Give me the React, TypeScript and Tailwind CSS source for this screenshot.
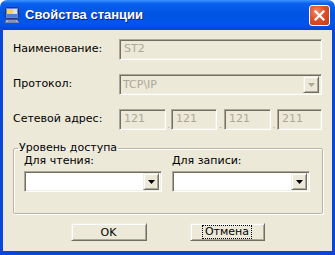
import React from "react";

const font = { fontFamily: '"DejaVu Sans", "Liberation Sans", sans-serif' };

// sunken 3D edit border (XP classic controls)
const sunken =
  "border-t border-l border-t-[#aca899] border-l-[#aca899] border-b border-r border-b-white border-r-white shadow-[inset_1px_1px_0_#716f64,inset_-1px_-1px_0_#f1efe2]";
const raised =
  "border-t border-l border-t-[#f1efe2] border-l-[#f1efe2] border-b border-r border-b-[#716f64] border-r-[#716f64] shadow-[inset_1px_1px_0_#ffffff,inset_-1px_-1px_0_#aca899] bg-[#ece9d8]";

const Arrow = ({ color }: { color: string }) => (
  <svg width="7" height="4" viewBox="0 0 7 4">
    <path d="M0 0h7L3.5 4z" fill={color} />
  </svg>
);

const Combo = ({ width, disabled, value }: { width: string; disabled?: boolean; value?: string }) => (
  <div
    className={`${sunken} ${width} h-[21px] flex items-center justify-between pl-[3px] pr-[2px] ${
      disabled ? "bg-[#ece9d8] text-[#aca899]" : "bg-white"
    }`}
  >
    <span className="text-[11px] leading-none">{value}</span>
    <div className={`${raised} w-[16px] h-[17px] flex items-center justify-center`}>
      <Arrow color={disabled ? "#aca899" : "#000"} />
    </div>
  </div>
);

const Field = ({ width, value }: { width: string; value: string }) => (
  <div className={`${sunken} ${width} h-[21px] bg-[#ece9d8] text-[#aca899] flex items-center pl-[4px] text-[11px]`}>
    {value}
  </div>
);

const Dot = ({ w }: { w: string }) => (
  <span className={`${w} text-[#aca899] text-[9px] leading-none text-center`}>.</span>
);

const App = () => {
  return (
    <div className="w-[335px] h-[255px] flex flex-col text-black" style={font}>
      {/* title bar */}
      <div className="h-[30px] rounded-t-[7px] bg-[linear-gradient(to_bottom,#3d95ff_0%,#0a60f0_12%,#0054e3_45%,#0055eb_80%,#0046d5_100%)] flex items-center pl-[4px] pr-[5px]">
        <svg width="17" height="17" viewBox="0 0 17 17" className="mr-[4px] mt-[1px]">
          <rect x="1.5" y="0.5" width="13" height="11" rx="1" fill="#6c86c8" stroke="#26347a" />
          <rect x="3" y="2" width="10" height="8" fill="#d7e4f7" />
          <path d="M3 2h6v5H3z" fill="#f0d840" />
          <path d="M3 7h10v3H3z" fill="#4a80d8" />
          <path d="M2 12.5h11l3 3.5H0.5z" fill="#a8b2cf" stroke="#3a4a80" strokeWidth="0.8" />
          <path d="M4 14h8" stroke="#5a6690" strokeWidth="0.8" />
        </svg>
        <span
          className="text-white font-bold text-[13px] [text-shadow:1px_1px_0_#0a1e8c]"
          style={{ fontFamily: '"Liberation Sans", Arial, sans-serif' }}
        >
          Свойства станции
        </span>
        <div className="ml-auto w-[21px] h-[21px] rounded-[3px] border border-white bg-[radial-gradient(circle_at_35%_30%,#f08a6a_0%,#e0502a_45%,#c23a14_100%)] flex items-center justify-center">
          <svg width="11" height="11" viewBox="0 0 11 11">
            <path d="M1.5 1.5l8 8M9.5 1.5l-8 8" stroke="#fff" strokeWidth="2.2" strokeLinecap="square" />
          </svg>
        </div>
      </div>

      {/* body */}
      <div className="flex-1 bg-[#ece9d8] border-x-[3px] border-b-[4px] border-[#0847d9] flex flex-col pl-[10px] pr-[10px] pt-[9px] text-[11px]">
        <div className="flex items-center h-[21px]">
          <span className="w-[106px]">Наименование:</span>
          <Field width="w-[203px]" value="ST2" />
        </div>
        <div className="flex items-center h-[21px] mt-[14px]">
          <span className="w-[106px]">Протокол:</span>
          <Combo width="w-[203px]" disabled value="TCP\IP" />
        </div>
        <div className="flex items-center h-[21px] mt-[14px]">
          <span className="w-[106px]">Сетевой адрес:</span>
          <div className="flex items-end">
            <Field width="w-[47px]" value="121" />
            <Dot w="w-[5px]" />
            <Field width="w-[46px]" value="121" />
            <Dot w="w-[7px]" />
            <Field width="w-[47px]" value="121" />
            <Dot w="w-[6px]" />
            <Field width="w-[45px]" value="211" />
          </div>
        </div>

        <fieldset className="mt-[12px] w-[310px] h-[72px] border border-[#b8b5a5] shadow-[1px_1px_0_#fff,inset_1px_1px_0_#fff] rounded-[2px] px-[10px] pb-[13px] flex">
          <legend className="px-[1px] ml-[-6px] leading-[12px]">Уровень доступа</legend>
          <div className="flex gap-[10px] w-full">
            <div className="flex flex-col">
              <span className="mb-[4px] leading-[13px]">Для чтения:</span>
              <Combo width="w-[138px]" />
            </div>
            <div className="flex flex-col">
              <span className="mb-[4px] leading-[13px]">Для записи:</span>
              <Combo width="w-[138px]" />
            </div>
          </div>
        </fieldset>

        <div className="flex justify-center gap-[43px] mt-[9px]">
          <button className={`${raised} w-[76px] h-[18px] text-[11px] leading-none`}>OK</button>
          <button className={`${raised} w-[75px] h-[18px] text-[11px] leading-none flex items-center justify-center`}>
            <span className="outline outline-1 outline-dotted outline-black px-[2px] leading-[12px]">Отмена</span>
          </button>
        </div>
      </div>
    </div>
  );
};

export default App;
